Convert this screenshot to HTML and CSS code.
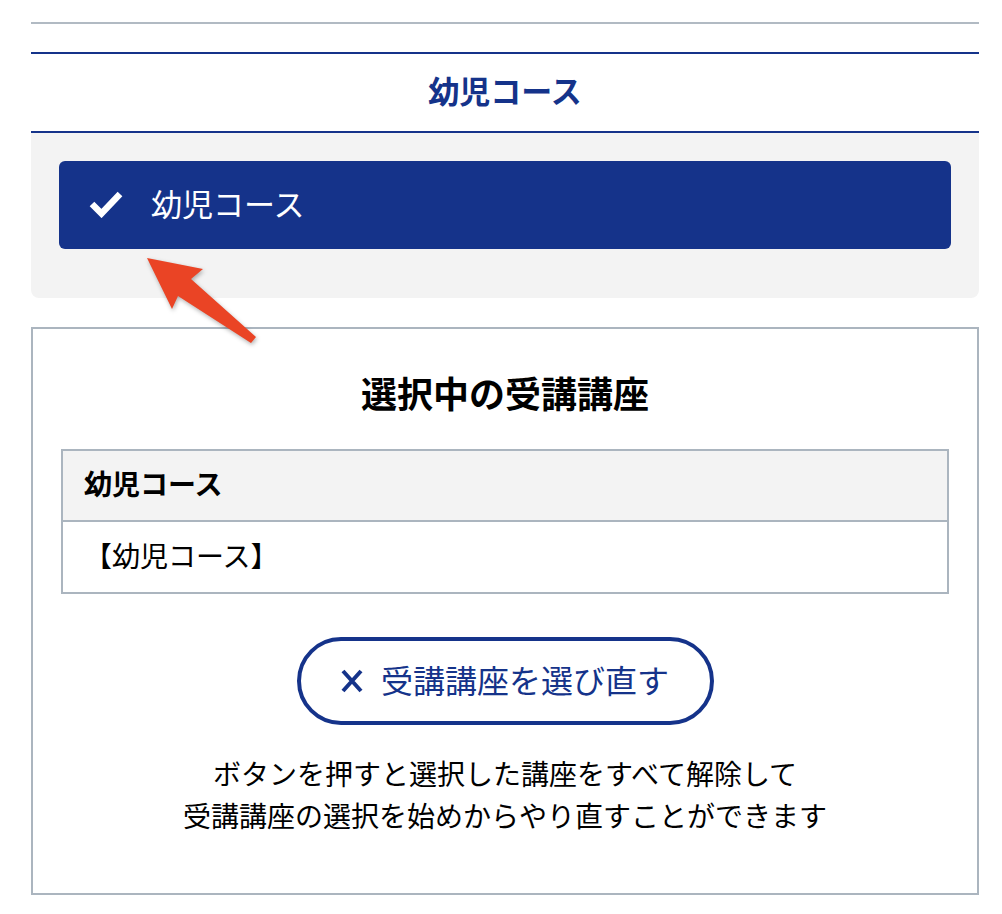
FILE: index.html
```html
<!DOCTYPE html>
<html lang="ja">
<head>
	<meta charset="UTF-8">
	<title>受講講座の選択</title>
	<link rel="stylesheet" href="styles.css">
</head>
<body>
	<div class="wrap">
		<div class="topline"></div>
		<div class="course">
			<h2 class="course_ttl">幼児コース</h2>
			<div class="course_body">
				<a href="javascript:;" class="course_btn">
					<svg class="ico_check" width="34" height="28" viewBox="0 0 34 28"><polyline points="3,14 12.5,23.5 31,4" fill="none" stroke="#fff" stroke-width="6.5"/></svg>
					<span>幼児コース</span>
				</a>
			</div>
		</div>
		<svg class="pointer" width="130" height="100" viewBox="140 250 130 100"><polygon points="147,258 203,269 191,279 256,337 251,343 178,296 172,309" fill="#ea4425"/></svg>

		<div class="selected">
			<h3 class="selected_ttl">選択中の受講講座</h3>
			<table class="selected_tbl">
				<tr><th>幼児コース</th></tr>
				<tr><td>【幼児コース】</td></tr>
			</table>
			<a href="javascript:;" class="reset_btn">
				<svg class="ico_close" width="22" height="24" viewBox="0 0 22 24"><path d="M2 2 L20 22 M20 2 L2 22" stroke="#15338a" stroke-width="4" fill="none"/></svg>
				<span>受講講座を選び直す</span>
			</a>
			<p class="selected_note">ボタンを押すと選択した講座をすべて解除して<br>受講講座の選択を始めからやり直すことができます</p>
		</div>
	</div>
</body>
</html>
```

FILE: styles.css
```css
body,div,h2,h3,p,table {
	margin:0;
	padding:0;
}
body {
	font-family: "Noto Sans CJK JP", sans-serif;
	color:#000;
	background:#fff;
}
a {
	text-decoration: none;
}
.wrap {
	width:948px;
	margin-left:31px;
	padding-top:22px;
	position: relative;
}
.topline {
	height:2px;
	background:#b1bac3;
}
.course {
	margin-top:28px;
}
.course_ttl {
	border-top:2px solid #15338a;
	border-bottom:2px solid #15338a;
	line-height:71px;
	padding-bottom:6px;
	font-size:31px;
	font-weight: bold;
	color:#15338a;
	text-align: center;
}
.course_body {
	background:#f3f3f3;
	border-radius: 0 0 8px 8px;
	padding:28px 28px 49px;
}
.course_btn {
	display: flex;
	align-items: center;
	height:88px;
	padding-left:30px;
	background:#15338a;
	border-radius: 6px;
	color:#fff;
	font-size:31px;
}
.course_btn span {
	margin-bottom:6px;
}
.ico_check {
	margin-right:28px;
	margin-bottom:2px;
}
.pointer {
	position: absolute;
	left:109px;
	top:250px;
	filter: drop-shadow(1px 2px 2px rgba(0,0,0,.3));
}
.selected {
	margin-top:29px;
	border:2px solid #abb5bf;
	padding:0 28px 57px;
}
.selected_ttl {
	margin-top:36px;
	line-height:54px;
	font-size:36px;
	font-weight: bold;
	text-align: center;
}
.selected_tbl {
	width:100%;
	margin-top:30px;
	border-collapse: collapse;
	font-size:28px;
}
.selected_tbl th,
.selected_tbl td {
	border:2px solid #abb5bf;
	padding:0 21px 5px;
	text-align: left;
}
.selected_tbl th {
	height:64px;
	background:#f3f3f3;
	font-weight: bold;
}
.selected_tbl td {
	height:65px;
}
.reset_btn {
	display: flex;
	align-items: center;
	justify-content: center;
	box-sizing: border-box;
	width:417px;
	height:88px;
	margin:43px auto 0;
	border:4px solid #15338a;
	border-radius: 44px;
	color:#15338a;
	font-size:32px;
}
.reset_btn span {
	margin-bottom:4px;
}
.ico_close {
	margin-right:18px;
}
.selected_note {
	margin-top:27px;
	font-size:28px;
	line-height:42px;
	text-align: center;
}
```
